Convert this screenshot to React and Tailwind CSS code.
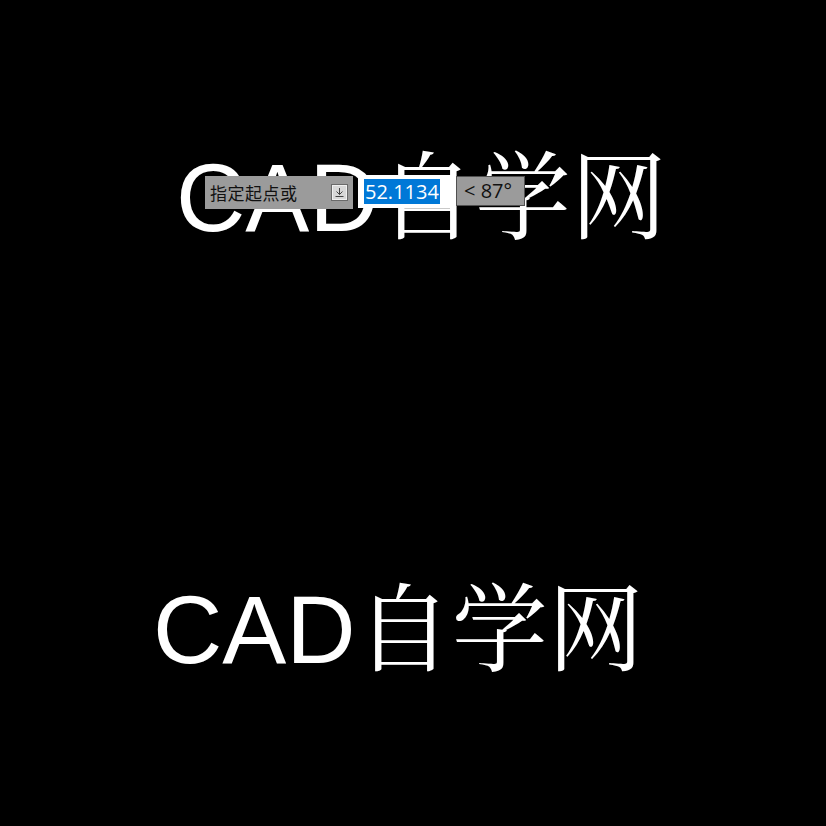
export default function App() {
  const big = "font-['Liberation_Sans','Noto_Serif_CJK_SC','Noto_Sans_CJK_SC',sans-serif] text-[96px] leading-none text-white whitespace-nowrap"
  return (
    <div className="relative w-[826px] h-[826px] bg-black overflow-hidden">
      <div className="flex flex-col pt-[150px]">
        <div className={`${big} pl-[176px]`}>CAD自学网</div>
        <div className={`${big} pl-[153px] mt-[336px]`}>CAD自学网</div>
      </div>

      {/* dynamic input tooltip */}
      <div className="absolute left-[205px] top-[175px] flex items-start gap-[5px] font-['Open_Sans','Noto_Sans_CJK_SC',sans-serif]">
        <div className="flex items-center justify-between w-[148px] h-[33px] mt-[1px] bg-[#9b9b9b] pl-[5px] pr-[6px]">
          <span className="text-[17px] leading-none text-[#111] tracking-[0.5px] font-['Noto_Sans_CJK_SC',sans-serif]">指定起点或</span>
          <span className="flex items-center justify-center w-[15px] h-[15px] bg-[#d8d8d8] border border-[#f0f0f0] outline outline-1 outline-[#6a6a6a]">
            <svg width="11" height="11" viewBox="0 0 11 11" fill="none" stroke="#444" strokeWidth="1">
              <path d="M5.5 1v6.5M2.5 4.5l3 3 3-3M1.5 9.5h8" />
            </svg>
          </span>
        </div>
        <div className="flex items-center w-[93px] h-[33px] bg-white px-[6px]">
          <span className="bg-[#0078d7] text-white text-[20px] leading-[25px] px-[1px]">52.1134</span>
        </div>
        <div className="flex items-center w-[69px] h-[30px] mt-[1px] bg-[#9b9b9b] border border-[#505050] pl-[7px] text-[20px] leading-none text-[#111]">
          &lt; 87°
        </div>
      </div>
    </div>
  )
}
